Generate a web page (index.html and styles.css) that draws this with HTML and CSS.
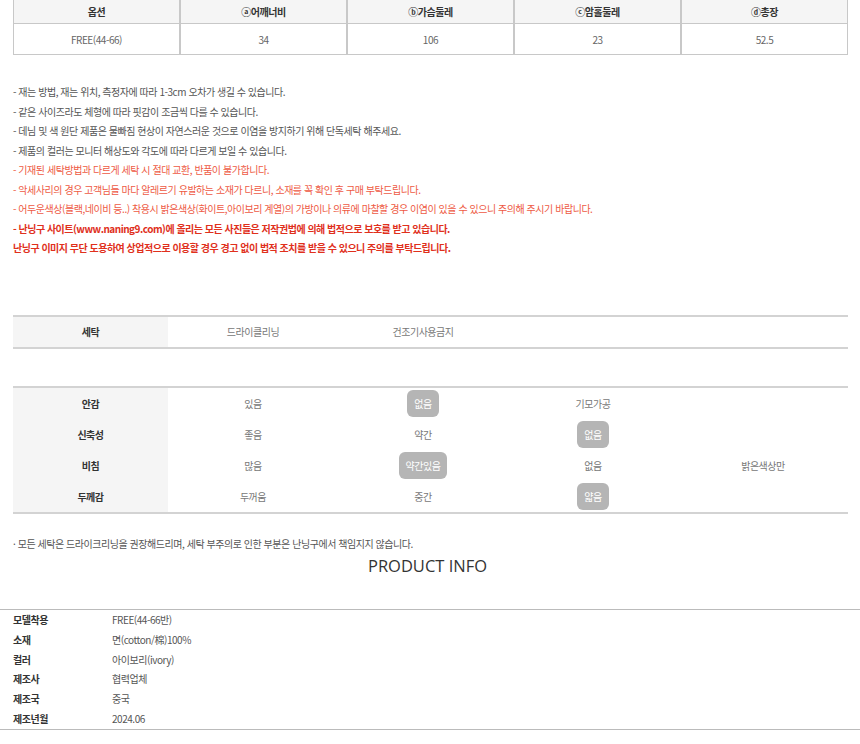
FILE: index.html
```html
<!DOCTYPE html>
<html lang="ko">
<head>
<meta charset="utf-8">
<link rel="stylesheet" href="styles.css">
</head>
<body>
<div class="wrap">
  <table class="size">
    <tr class="head">
      <th>옵션</th><th>ⓐ어깨너비</th><th>ⓑ가슴둘레</th><th>ⓒ암홀둘레</th><th>ⓓ총장</th>
    </tr>
    <tr>
      <td>FREE(44-66)</td><td>34</td><td>106</td><td>23</td><td>52.5</td>
    </tr>
  </table>

  <ul class="notes">
    <li>- 재는 방법, 재는 위치, 측정자에 따라 1-3cm 오차가 생길 수 있습니다.</li>
    <li>- 같은 사이즈라도 체형에 따라 핏감이 조금씩 다를 수 있습니다.</li>
    <li>- 데님 및 색 원단 제품은 물빠짐 현상이 자연스러운 것으로 이염을 방지하기 위해 단독세탁 해주세요.</li>
    <li>- 제품의 컬러는 모니터 해상도와 각도에 따라 다르게 보일 수 있습니다.</li>
    <li class="red">- 기재된 세탁방법과 다르게 세탁 시 절대 교환, 반품이 불가합니다.</li>
    <li class="red">- 악세사리의 경우 고객님들 마다 알레르기 유발하는 소재가 다르니, 소재를 꼭 확인 후 구매 부탁드립니다.</li>
    <li class="red">- 어두운색상(블랙,네이비 등..) 착용시 밝은색상(화이트,아이보리 계열)의 가방이나 의류에 마찰할 경우 이염이 있을 수 있으니 주의해 주시기 바랍니다.</li>
    <li class="bold">- 난닝구 사이트(www.naning9.com)에 올리는 모든 사진들은 저작권법에 의해 법적으로 보호를 받고 있습니다.</li>
    <li class="bold">난닝구 이미지 무단 도용하여 상업적으로 이용할 경우 경고 없이 법적 조치를 받을 수 있으니 주의를 부탁드립니다.</li>
  </ul>

  <table class="grid wash">
    <tr>
      <th>세탁</th><td>드라이클리닝</td><td>건조기사용금지</td><td></td><td></td>
    </tr>
  </table>

  <table class="grid fabric">
    <tr><th>안감</th><td>있음</td><td><span class="pill">없음</span></td><td>기모가공</td><td></td></tr>
    <tr><th>신축성</th><td>좋음</td><td>약간</td><td><span class="pill">없음</span></td><td></td></tr>
    <tr><th>비침</th><td>많음</td><td><span class="pill">약간있음</span></td><td>없음</td><td>밝은색상만</td></tr>
    <tr><th>두께감</th><td>두꺼움</td><td>중간</td><td><span class="pill">얇음</span></td><td></td></tr>
  </table>

  <p class="wash-note">· 모든 세탁은 드라이크리닝을 권장해드리며, 세탁 부주의로 인한 부분은 난닝구에서 책임지지 않습니다.</p>
  <h2 class="pi-title">PRODUCT INFO</h2>
</div>

<div class="info">
  <dl class="info-list">
    <div class="info-row"><dt>모델착용</dt><dd>FREE(44-66반)</dd></div>
    <div class="info-row"><dt>소재</dt><dd>면(cotton/棉)100%</dd></div>
    <div class="info-row"><dt>컬러</dt><dd>아이보리(ivory)</dd></div>
    <div class="info-row"><dt>제조사</dt><dd>협력업체</dd></div>
    <div class="info-row"><dt>제조국</dt><dd>중국</dd></div>
    <div class="info-row"><dt>제조년월</dt><dd>2024.06</dd></div>
  </dl>
</div>
</body>
</html>
```

FILE: styles.css
```css
html, body {
  margin: 0;
  padding: 0;
  background: #fff;
}
body {
  font-family: "Noto Sans CJK KR", "Noto Sans", sans-serif;
  font-size: 10px;
  color: #555;
  letter-spacing: -0.46px;
}
.wrap {
  padding: 0 12px 0 13px;
}
table {
  border-spacing: 0;
  width: 835px;
  table-layout: fixed;
}
.size th, .size td {
  border: 1px solid #c8c8c8;
  border-top: 0;
  text-align: center;
  font-size: 10px;
  padding: 0;
}
.size th {
  height: 23px;
  background: #f5f5f5;
  color: #333;
  font-weight: bold;
}
.size td {
  height: 30px;
  color: #666;
}
.notes {
  list-style: none;
  margin: 27px 0 0;
  padding: 0;
}
.notes li {
  line-height: 19.5px;
  height: 19.5px;
  white-space: nowrap;
}
.notes .red {
  color: #ee5a44;
}
.notes .bold {
  color: #e0301c;
  font-weight: bold;
  letter-spacing: -0.5px;
}
.grid {
  border-top: 2px solid #d3d3d3;
  border-bottom: 2px solid #d3d3d3;
}
.grid th {
  width: 155px;
  background: #f5f5f5;
  color: #333;
  font-weight: bold;
  padding: 0;
}
.grid td {
  text-align: center;
  color: #777;
  padding: 0;
}
.wash {
  margin-top: 57px;
}
.wash th, .wash td {
  height: 30px;
}
.fabric {
  margin-top: 37px;
}
.fabric th, .fabric td {
  height: 31px;
}
.pill {
  display: inline-block;
  background: #b5b5b5;
  color: #fff;
  border-radius: 6px;
  padding: 0 7px;
  line-height: 27px;
  height: 27px;
}
.wash-note {
  margin: 20px 0 0;
  line-height: 19.5px;
}
.pi-title {
  margin: 0;
  padding-right: 6px;
  text-align: center;
  font-family: "Open Sans", "Noto Sans", sans-serif;
  font-weight: 400;
  font-size: 16.5px;
  letter-spacing: 0;
  color: #333;
  line-height: 26px;
}
.info {
  margin-top: 30px;
  border-top: 1px solid #bbb;
  border-bottom: 1px solid #bbb;
}
.info-list {
  margin: 0;
  padding: 0 13px;
}
.info-row {
  display: flex;
  height: 19.8px;
  line-height: 19.8px;
}
.info-row dt {
  width: 99px;
  font-weight: bold;
  color: #333;
}
.info-row dd {
  margin: 0;
  color: #555;
}
```
